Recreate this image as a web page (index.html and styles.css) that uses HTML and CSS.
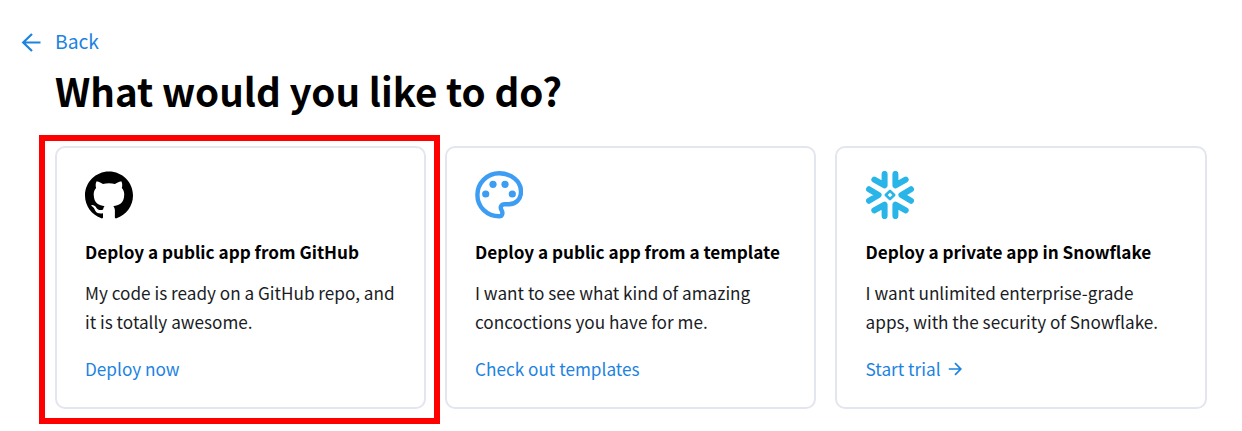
FILE: index.html
```html
<!DOCTYPE html>
<html lang="en">
<head>
<meta charset="utf-8">
<title>What would you like to do?</title>
<link rel="stylesheet" href="styles.css">
</head>
<body>
<main class="page">
  <a class="back">
    <svg class="back-icon" viewBox="0 0 20 20"><path d="M19.5 10.5H2M11 2L2.2 10.5L11 19"/></svg>
    <span>Back</span>
  </a>
  <h1 class="heading">What would you like to do?</h1>
  <div class="cards">
    <section class="card highlighted">
      <svg class="icon" viewBox="0 0 24 24"><path d="M12 .297c-6.63 0-12 5.373-12 12 0 5.303 3.438 9.8 8.205 11.385.6.113.82-.258.82-.577 0-.285-.01-1.04-.015-2.04-3.338.724-4.042-1.61-4.042-1.61C4.422 18.07 3.633 17.7 3.633 17.7c-1.087-.744.084-.729.084-.729 1.205.084 1.838 1.236 1.838 1.236 1.07 1.835 2.809 1.305 3.495.998.108-.776.417-1.305.76-1.605-2.665-.3-5.466-1.332-5.466-5.93 0-1.31.465-2.38 1.235-3.22-.135-.303-.54-1.523.105-3.176 0 0 1.005-.322 3.3 1.23.96-.267 1.98-.399 3-.405 1.02.006 2.04.138 3 .405 2.28-1.552 3.285-1.23 3.285-1.23.645 1.653.24 2.873.12 3.176.765.84 1.23 1.91 1.23 3.22 0 4.61-2.805 5.625-5.475 5.92.42.36.81 1.096.81 2.22 0 1.606-.015 2.896-.015 3.286 0 .315.21.69.825.57C20.565 22.092 24 17.592 24 12.297c0-6.627-5.373-12-12-12"/></svg>
      <h2 class="title">Deploy a public app from GitHub</h2>
      <p class="text">My code is ready on a GitHub repo, and<br>it is totally awesome.</p>
      <a class="link">Deploy now</a>
    </section>
    <section class="card">
      <svg class="icon palette" viewBox="0 0 48 48">
        <path d="M24.3 45.3C12 45.3 2.4 36 2.4 24S12 2.3 24.3 2.3C36.5 2.3 46 10.3 46 20.6C46 28.5 40.5 33.2 34 33.2H29.5C26.3 33.2 24.8 36 26.4 38.8C28.3 42 27.3 45.3 24.3 45.3Z"/>
        <g class="dots"><circle cx="18" cy="13.3" r="3.6"/><circle cx="30" cy="13.3" r="3.6"/><circle cx="10.7" cy="23" r="3.6"/><circle cx="37.3" cy="23" r="3.6"/></g>
      </svg>
      <h2 class="title">Deploy a public app from a template</h2>
      <p class="text">I want to see what kind of amazing<br>concoctions you have for me.</p>
      <a class="link">Check out templates</a>
    </section>
    <section class="card card-private">
      <svg class="icon snowflake" viewBox="0 0 48 48">
        <path d="M8.3 8.6L18.6 14.4V2.9M39.7 8.6L29.4 14.4V2.9M8.3 39.4L18.6 33.6V45.1M39.7 39.4L29.4 33.6V45.1M3 18.2L12.6 24L3 29.8M45 18.2L35.4 24L45 29.8"/>
        <path class="core" d="M24 19.8L28.2 24L24 28.2L19.8 24Z"/>
      </svg>
      <h2 class="title">Deploy a private app in Snowflake</h2>
      <p class="text">I want unlimited enterprise-grade<br>apps, with the security of Snowflake.</p>
      <a class="link">Start trial <svg class="arrow" viewBox="0 0 14 14"><path d="M.8 7H12.5M7 1.2L12.8 7L7 12.8"/></svg></a>
    </section>
  </div>
</main>
</body>
</html>
```
FILE: styles.css
```css
* { box-sizing: border-box; }
body {
  margin: 0;
  background: #fff;
  color: #000;
  font-family: "Noto Sans CJK SC", "Noto Sans", sans-serif;
}
.page {
  min-height: 431px;
  padding: 28px 35px 0 55px;
}
.back {
  display: flex;
  align-items: center;
  gap: 14px;
  margin-left: -34px;
  height: 28px;
  font-size: 19.3px;
  line-height: 26px;
  color: #1c83e1;
}
.back span { padding-bottom: 2px; }
.back-icon { width: 20px; height: 20px; }
.back-icon path, .arrow path { fill: none; stroke: #1c83e1; stroke-width: 2.2; }
.heading {
  margin: 9px 0 31px;
  font-size: 38.6px;
  line-height: 50px;
  font-weight: 700;
  white-space: nowrap;
}
.cards {
  display: grid;
  grid-template-columns: 371px 371px 372px;
  gap: 19px;
}
.card {
  position: relative;
  height: 263px;
  padding: 23px 0 0 28px;
  border: 2px solid #e3e6ee;
  border-radius: 10px;
  white-space: nowrap;
}
.card-private { padding-left: 28.6px; }
.highlighted::after {
  content: "";
  position: absolute;
  inset: -13px -16px -17px -18px;
  border: 6px solid #f00;
}
.icon { display: block; width: 48px; height: 48px; }
.palette { fill: none; stroke: #3d9df3; stroke-width: 4.4; }
.dots { fill: #3d9df3; stroke: none; }
.snowflake { fill: none; stroke: #29b5e8; stroke-width: 6; stroke-linecap: round; stroke-linejoin: round; }
.core { stroke-width: 2.6; }
.title {
  margin: 19px 0 12px;
  font-size: 17.15px;
  line-height: 28px;
  font-weight: 700;
}
.text {
  margin: 0 0 19px;
  font-size: 17.17px;
  line-height: 29px;
  color: #1a1c24;
}
.link {
  display: flex;
  align-items: center;
  gap: 7px;
  font-size: 17.2px;
  line-height: 28px;
  color: #1c83e1;
}
.arrow { width: 14px; height: 14px; }
.arrow path { stroke-width: 1.7; }
```
